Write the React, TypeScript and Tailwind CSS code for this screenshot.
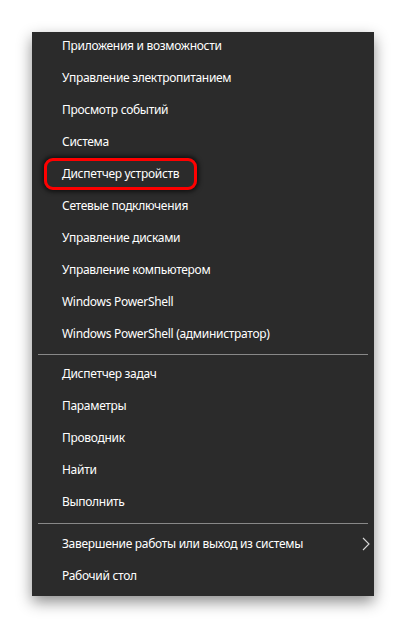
const groupA = [
  "Приложения и возможности",
  "Управление электропитанием",
  "Просмотр событий",
  "Система",
  "Диспетчер устройств",
  "Сетевые подключения",
  "Управление дисками",
  "Управление компьютером",
  "Windows PowerShell",
  "Windows PowerShell (администратор)",
];

const groupB = ["Диспетчер задач", "Параметры", "Проводник", "Найти", "Выполнить"];

const Row = ({ label, marked, sub }: { label: string; marked?: boolean; sub?: boolean }) => (
  <div className="relative h-8 pl-[30px] text-[12px] leading-[28px] tracking-[-0.3px] text-white">
    {label}
    {marked && (
      <div className="absolute left-[12px] top-[-2px] w-[153px] h-[32px] rounded-[9px] border-[3px] border-[#ff0000] shadow-[0_0_4px_2px_rgba(0,0,0,0.6)]" />
    )}
    {sub && (
      <svg className="absolute left-[330px] top-[7px]" width="8" height="14" viewBox="0 0 8 14" fill="none">
        <polyline points="1,1 7,7 1,13" stroke="#d8d8d8" strokeWidth="1.1" />
      </svg>
    )}
  </div>
);

export default function App() {
  return (
    <div className="w-[406px] h-[628px] bg-white pt-[32px] pl-[32px]" style={{ fontFamily: '"Noto Sans", "Open Sans", sans-serif' }}>
      <div className="w-[342px] h-[564px] bg-[#2b2b2b] pb-[2px] shadow-[0_6px_14px_rgba(0,0,0,0.45)] flex flex-col">
        {groupA.map((l) => (
          <Row key={l} label={l} marked={l === "Диспетчер устройств"} />
        ))}
        <div className="h-2 pt-[2px] px-[6px]">
          <div className="h-px bg-[#888888]" />
        </div>
        {groupB.map((l) => (
          <Row key={l} label={l} />
        ))}
        <div className="h-[10px] pt-[3px] px-[6px]">
          <div className="h-px bg-[#888888]" />
        </div>
        <Row label="Завершение работы или выход из системы" sub />
        <Row label="Рабочий стол" />
      </div>
    </div>
  );
}
